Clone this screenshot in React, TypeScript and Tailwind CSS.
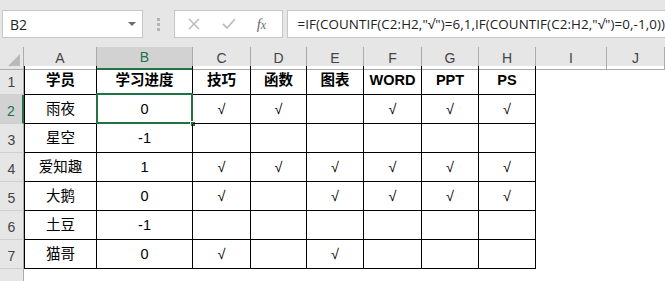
import React from "react";

const cols = ["A", "B", "C", "D", "E", "F", "G", "H", "I", "J"];
const header = ["学员", "学习进度", "技巧", "函数", "图表", "WORD", "PPT", "PS"];
const data: string[][] = [
  ["雨夜", "0", "√", "√", "", "√", "√", "√"],
  ["星空", "-1", "", "", "", "", "", ""],
  ["爱知趣", "1", "√", "√", "√", "√", "√", "√"],
  ["大鹅", "0", "√", "", "√", "√", "√", "√"],
  ["土豆", "-1", "", "", "", "", "", ""],
  ["猫哥", "0", "√", "", "√", "", "", ""],
];

const font = { fontFamily: '"Liberation Sans", "Noto Sans CJK SC", sans-serif' };
const ui = { fontFamily: '"Open Sans", "Noto Sans", sans-serif' };

export default function App() {
  const gridCols = "grid grid-cols-[24px_73px_96px_58px_56px_57px_58px_57px_57px_71px_1fr]";
  return (
    <div className="w-[665px] h-[281px] overflow-hidden bg-white" style={font}>
      {/* formula bar */}
      <div className="h-[47px] bg-[#e6e6e6] flex items-start pt-[10px] pl-[2px]">
        <div className="w-[141px] h-[28px] bg-white border border-[#c6c6c6] flex items-center justify-between pl-[7px] pr-[6px]">
          <span className="text-[14px] text-[#222]" style={ui}>B2</span>
          <span className="w-0 h-0 border-l-[4px] border-r-[4px] border-t-[4px] border-l-transparent border-r-transparent border-t-[#6b6b6b]" />
        </div>
        <div className="w-[31px] h-[28px] flex flex-col items-center justify-center gap-[2px]">
          <span className="w-[3px] h-[3px] bg-[#b5b5b5]" />
          <span className="w-[3px] h-[3px] bg-[#b5b5b5]" />
          <span className="w-[3px] h-[3px] bg-[#b5b5b5]" />
        </div>
        <div className="w-[110px] h-[28px] bg-white border border-[#c6c6c6] flex items-center">
          <svg width="12" height="12" viewBox="0 0 12 12" className="ml-[13px]">
            <path d="M1 1 L11 11 M11 1 L1 11" stroke="#bdbdbd" strokeWidth="1.6" />
          </svg>
          <svg width="14" height="12" viewBox="0 0 14 12" className="ml-[22px]">
            <path d="M1 6 L5 10 L13 1" stroke="#bdbdbd" strokeWidth="1.8" fill="none" />
          </svg>
          <span className="ml-[21px] text-[15px] italic text-[#6a6a6a]" style={{ fontFamily: '"Liberation Serif", serif' }}>
            <span className="italic">f</span><span className="text-[12px]">x</span>
          </span>
        </div>
        <div className="ml-[4px] flex-1 h-[28px] bg-white border border-[#c6c6c6] border-r-0 flex items-center pl-[9px] whitespace-nowrap">
          <span className="text-[13.4px] tracking-[0.08px] text-[#222]" style={ui}>
            =IF(COUNTIF(C2:H2,"√")=6,1,IF(COUNTIF(C2:H2,"√")=0,-1,0))
          </span>
        </div>
      </div>

      {/* column headers */}
      <div className={`${gridCols} h-[19px] bg-[#e6e6e6]`}>
        <div className="border-r border-b border-[#ababab] relative overflow-hidden">
          <div className="absolute right-[3px] bottom-[3px] w-0 h-0" style={{ borderRight: "12px solid #b9b9b9", borderTop: "12px solid transparent" }} />
        </div>
        {cols.map((c) => (
          <div
            key={c}
            className={`flex items-center justify-center text-[14px] border-r ${
              c === "B"
                ? "bg-[#d2d2d2] text-[#217346] border-b-2 border-b-[#217346] border-r-[#ababab]"
                : "text-[#444] border-b border-[#ababab]"
            }`}
          >
            {c}
          </div>
        ))}
      </div>

      {/* header row 1 */}
      <div className={`${gridCols} h-[29px]`}>
        <div className="bg-[#e6e6e6] border-r border-[#ababab] border-b border-b-[#cfcfcf] flex items-end justify-center pb-[1px] text-[14px] text-[#444]">1</div>
        {header.map((h, i) => (
          <div
            key={i}
            className={`flex items-center justify-center pt-[2px] text-[14.5px] font-bold text-black border-r border-b border-black ${i === 0 ? "border-l" : ""}`}
          >
            {h}
          </div>
        ))}
        <div />
        <div />
      </div>

      {/* data rows */}
      {data.map((row, r) => (
        <div key={r} className={`${gridCols} h-[29px]`}>
          <div
            className={`flex items-end justify-center pb-[1px] text-[14px] border-b border-b-[#cfcfcf] ${
              r === 0
                ? "bg-[#d2d2d2] text-[#217346] border-r-2 border-r-[#217346]"
                : "bg-[#e6e6e6] text-[#444] border-r border-[#ababab]"
            }`}
          >
            {r + 2}
          </div>
          {row.map((v, i) => (
            <div
              key={i}
              className={`relative flex items-center justify-center pt-[2px] text-[14.5px] text-black border-r border-b border-black ${i === 0 ? "border-l" : ""}`}
            >
              {v}
              {r === 0 && i === 1 && (
                <>
                  <div className="absolute left-[-1px] top-[-2px] right-[-1px] bottom-[-1px] border-2 border-[#217346] pointer-events-none" />
                  <div className="absolute right-[-4px] bottom-[-4px] w-[6px] h-[6px] bg-[#217346] border border-white" />
                </>
              )}
            </div>
          ))}
          <div />
          <div />
        </div>
      ))}

      {/* row 8 */}
      <div className={`${gridCols} h-[29px]`}>
        <div className="bg-[#e6e6e6] border-r border-[#ababab]" />
      </div>
    </div>
  );
}
